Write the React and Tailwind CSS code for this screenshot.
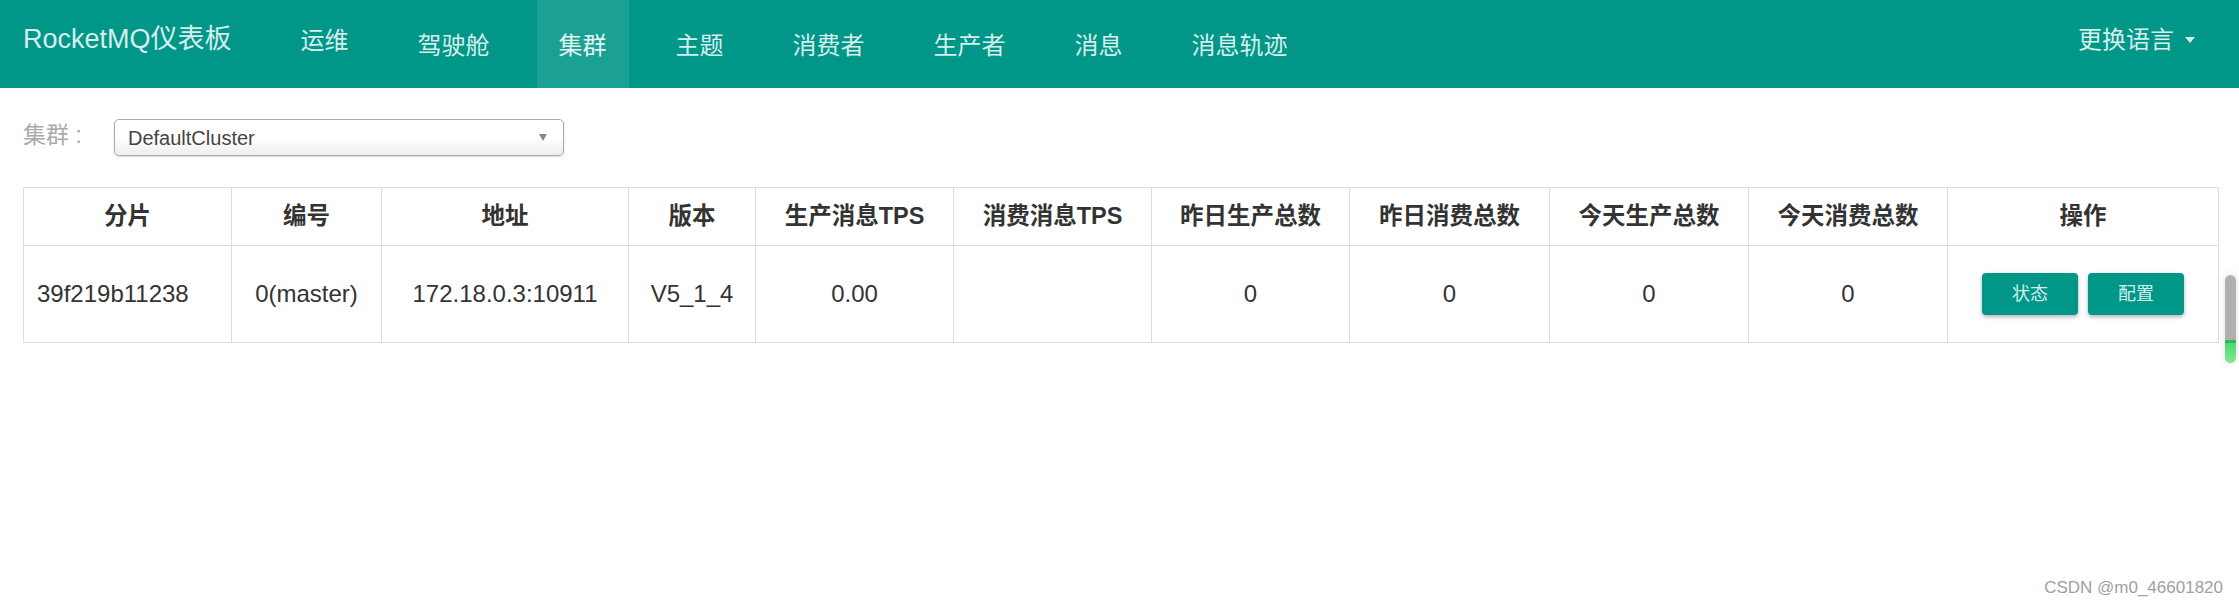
import React from "react";

const navItems = [
  { label: "运维", up: true },
  { label: "驾驶舱" },
  { label: "集群", active: true },
  { label: "主题" },
  { label: "消费者" },
  { label: "生产者" },
  { label: "消息" },
  { label: "消息轨迹" },
];

const cols = [
  { h: "分片", w: 208 },
  { h: "编号", w: 150 },
  { h: "地址", w: 247 },
  { h: "版本", w: 127 },
  { h: "生产消息TPS", w: 198 },
  { h: "消费消息TPS", w: 198 },
  { h: "昨日生产总数", w: 198 },
  { h: "昨日消费总数", w: 200 },
  { h: "今天生产总数", w: 199 },
  { h: "今天消费总数", w: 199 },
  { h: "操作", w: 271 },
];

const row = ["39f219b11238", "0(master)", "172.18.0.3:10911", "V5_1_4", "0.00", "", "0", "0", "0", "0"];

export default function App() {
  return (
    <div className="relative min-h-[606px] bg-white font-['Liberation_Sans','Noto_Sans_CJK_SC',sans-serif]">
      <nav className="flex h-[88px] items-stretch bg-[#009688] pl-[23px] pr-[44px] text-[#d6eeec]">
        <div className="flex items-center pb-[10px] text-[27px] leading-none">RocketMQ仪表板</div>
        <ul className="ml-[47px] flex gap-[25px]">
          {navItems.map((it) => (
            <li
              key={it.label}
              className={
                "flex items-center px-[22px] text-[24px] leading-none " +
                (it.up ? "pb-[7px] " : "pt-[3px] ") +
                (it.active ? "bg-[#1aa194] text-[#e4f4f2]" : "")
              }
            >
              {it.label}
            </li>
          ))}
        </ul>
        <div className="ml-auto flex items-center gap-[11px] pb-[8px] text-[24px] leading-none">
          <span>更换语言</span>
          <span className="h-0 w-0 border-x-[5px] border-t-[6px] border-x-transparent border-t-[#d6eeec]" />
        </div>
      </nav>

      <div className="px-[23px] pt-[31px]">
        <div className="flex items-center">
          <div className="w-[91px] pb-[4px] text-[23px] leading-none text-[#aaaaaa]">集群 :</div>
          <div className="flex h-[37px] w-[450px] items-center justify-between rounded-[5px] border border-[#aaaaaa] bg-gradient-to-b from-white from-50% to-[#eeeeee] pl-[13px] pr-[16px] shadow-[0_1px_2px_rgba(0,0,0,0.15)]">
            <span className="text-[20px] leading-none text-[#444444]">DefaultCluster</span>
            <span className="h-0 w-0 border-x-[4px] border-t-[7px] border-x-transparent border-t-[#888888]" />
          </div>
        </div>

        <table className="mt-[31px] w-[2195px] table-fixed border-collapse border border-[#dddddd]">
          <colgroup>
            {cols.map((c) => (
              <col key={c.h} style={{ width: c.w }} />
            ))}
          </colgroup>
          <thead>
            <tr className="h-[58px]">
              {cols.map((c) => (
                <th
                  key={c.h}
                  className="border border-[#dddddd] p-0 text-center text-[23.5px] font-bold text-[#333333]"
                >
                  {c.h}
                </th>
              ))}
            </tr>
          </thead>
          <tbody>
            <tr className="h-[97px]">
              {row.map((v, i) => (
                <td
                  key={i}
                  className={
                    "border border-[#dddddd] py-0 text-[24px] text-[#333333] " +
                    (i === 0 ? "pl-[13px] text-left" : "text-center")
                  }
                >
                  {v}
                </td>
              ))}
              <td className="border border-[#dddddd] p-0">
                <div className="flex justify-center gap-[10px]">
                  <button className="h-[42px] w-[96px] rounded-[4px] bg-[#009688] text-[18px] text-[#d6eeec] shadow-[0_2px_4px_rgba(0,0,0,0.3)]">
                    状态
                  </button>
                  <button className="h-[42px] w-[96px] rounded-[4px] bg-[#009688] text-[18px] text-[#d6eeec] shadow-[0_2px_4px_rgba(0,0,0,0.3)]">
                    配置
                  </button>
                </div>
              </td>
            </tr>
          </tbody>
        </table>
      </div>

      <div className="absolute left-[2225px] top-[275px] flex h-[88px] w-[11px] flex-col overflow-hidden rounded-full shadow-[0_0_8px_rgba(0,0,0,0.12)]">
        <div className="h-[65px] bg-[#b0b0b0]" />
        <div className="h-[3px] bg-[#2fb856]" />
        <div className="flex-1 bg-gradient-to-b from-[#4fd870] to-[#7ae894]" />
      </div>

      <div className="absolute right-[16px] top-[579px] text-[17px] leading-none text-[#a0a0a0]">
        CSDN @m0_46601820
      </div>
    </div>
  );
}
